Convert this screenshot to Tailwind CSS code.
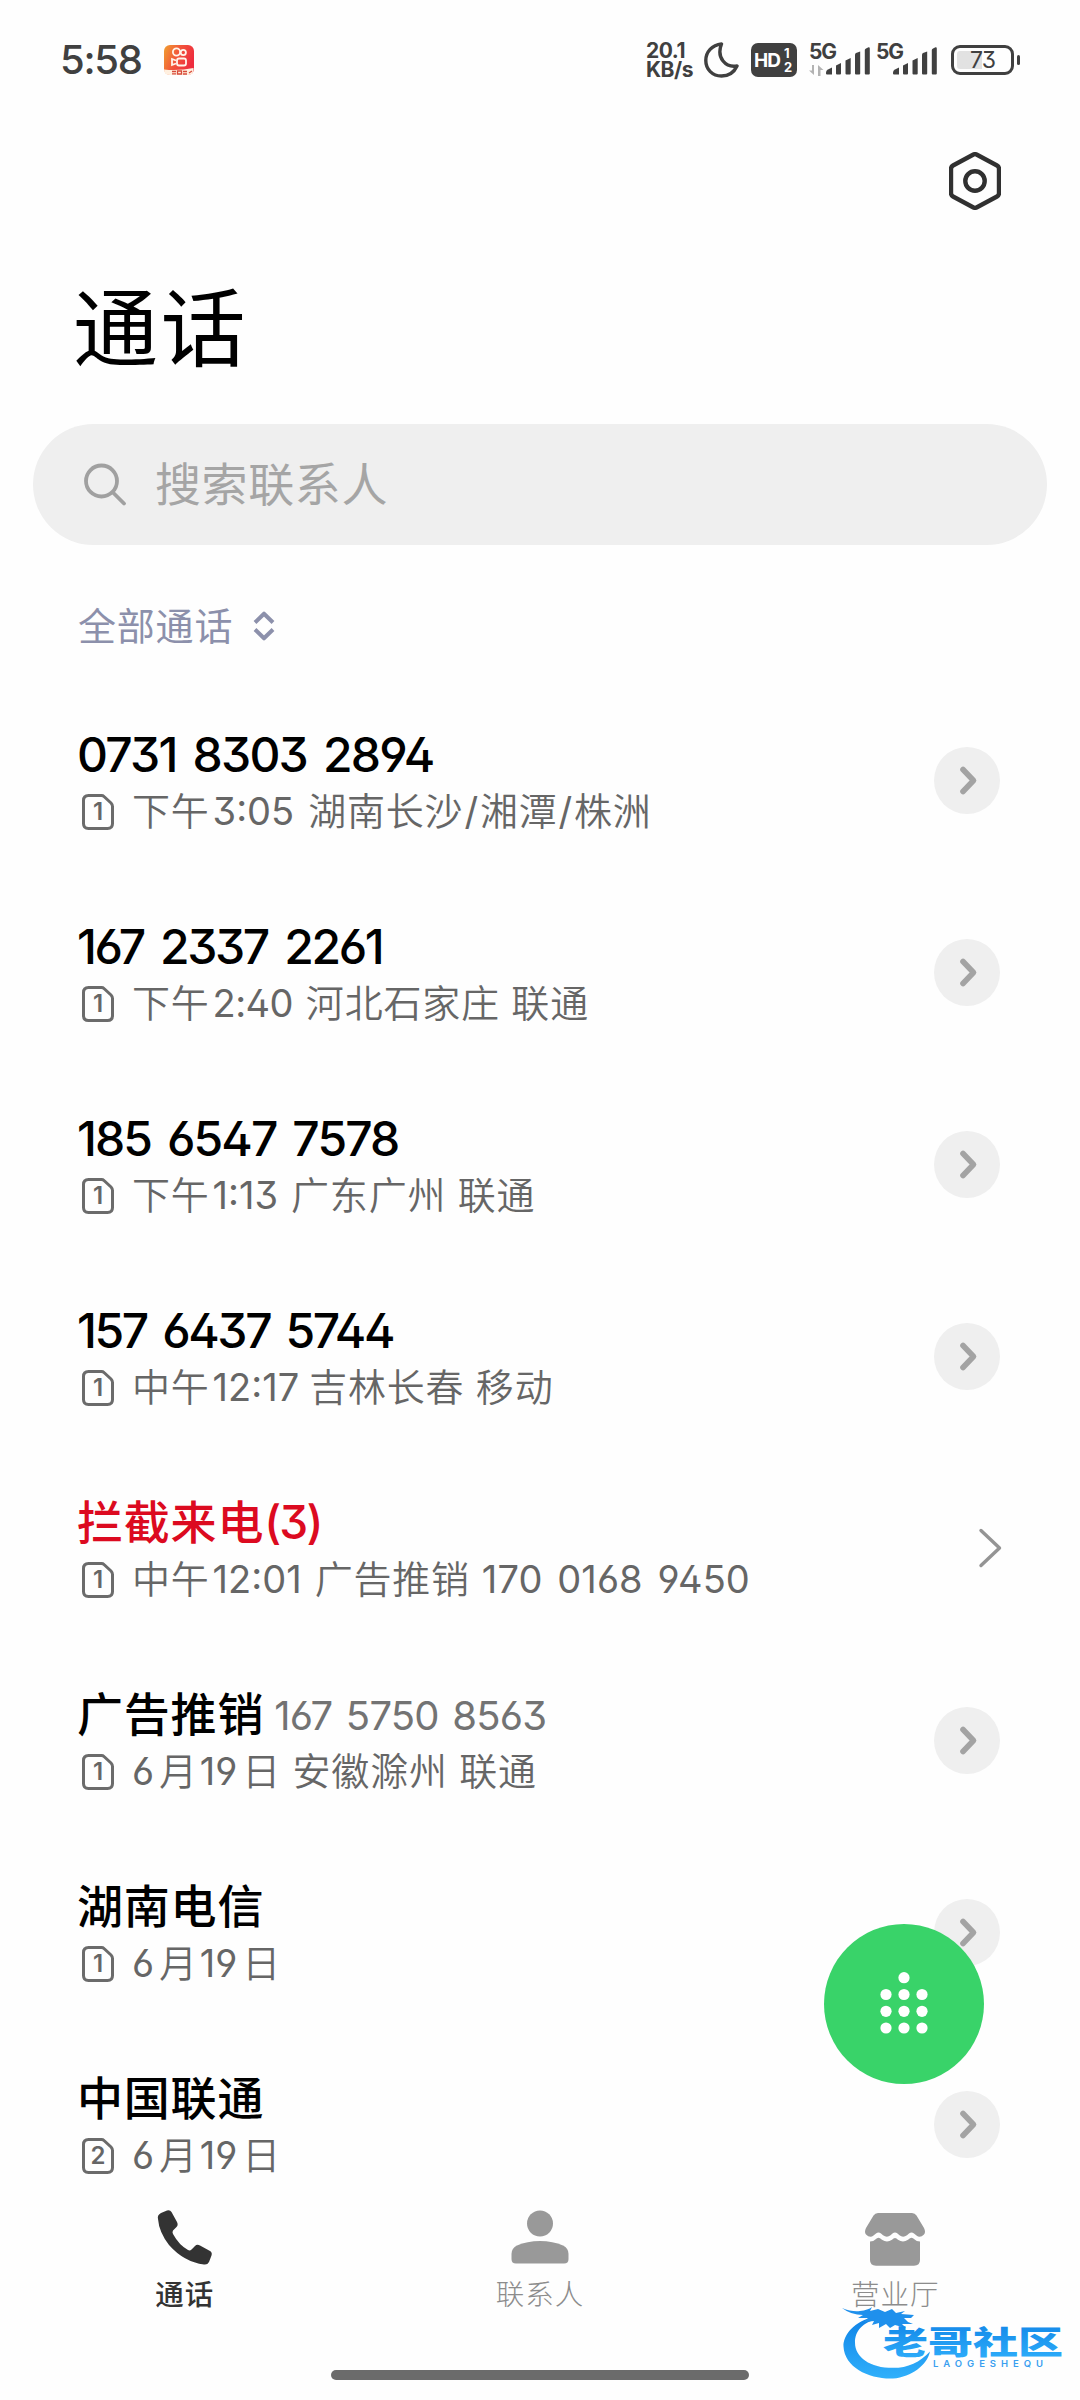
<!DOCTYPE html>
<html lang="zh-CN">
<head>
<meta charset="utf-8">
<title>通话</title>
<script src="https://cdn.jsdelivr.net/npm/@tailwindcss/browser@4"></script>
</head>
<body class="bg-[#fefefe] font-['Inter','Noto_Sans_CJK_SC',sans-serif] [font-feature-settings:'ss01','cv09']">
<svg class="hidden">
  <symbol id="sim" viewBox="0 0 32 36"><path d="M6.500 1.500H19.500Q21 1.500 22 2.500L29 9Q30.500 10.500 30.500 12.500V29.500Q30.500 34.500 25.500 34.500H6.500Q1.500 34.500 1.500 29.500V6.500Q1.500 1.500 6.500 1.500Z" fill="none" stroke="#6b6b6b" stroke-width="3"/></symbol>
  <symbol id="go" viewBox="0 0 66 67"><ellipse cx="33" cy="33.500" rx="33" ry="33.500" fill="#efefef"/><path d="M29 22.500L39.500 33.500L29 44.500" fill="none" stroke="#a3a3a3" stroke-width="5.600" stroke-linecap="round" stroke-linejoin="round"/></symbol>
  <symbol id="bars" viewBox="0 0 45 28"><g fill="#404040"><path d="M0 25.500Q0 23.500 2 22.500L6 20.500V27.500H1Q0 27.500 0 26.500Z"/><path d="M10 18.500L15 16V26.500Q15 27.500 14 27.500H11Q10 27.500 10 26.500Z"/><path d="M19.500 13.500L24.700 11V26.500Q24.700 27.500 23.700 27.500H20.500Q19.500 27.500 19.500 26.500Z"/><path d="M29 7.500Q29 6.500 30 6L34.200 4.500V26.500Q34.200 27.500 33.200 27.500H30Q29 27.500 29 26.500Z"/><path d="M38.800 3Q38.800 2 40 1.500L42.500 .3Q43.800 0 43.800 1.500V26.500Q43.800 27.500 42.800 27.500H39.800Q38.800 27.500 38.800 26.500Z"/></g></symbol>
</svg>

<div class="relative flex h-[2400px] w-[1080px] flex-col overflow-hidden">

  <!-- status bar -->
  <div class="flex h-[120px] shrink-0 items-center pl-[60px] pr-[60px] text-[#404040]">
    <span class="text-[40px] font-[450] leading-none tracking-[-1.3px]">5:58</span>
    <svg class="ml-[22px]" width="30" height="30" viewBox="0 0 30 30">
      <defs><linearGradient id="ks" x1="0" y1="0" x2="1" y2=".4"><stop offset="0" stop-color="#f0a030"/><stop offset=".5" stop-color="#f2553a"/><stop offset="1" stop-color="#ee2c3e"/></linearGradient></defs>
      <rect width="30" height="30" rx="6" fill="url(#ks)"/>
      <g fill="none" stroke="#fff4ea" stroke-width="1.800"><circle cx="12.500" cy="7" r="3.600"/><circle cx="19.300" cy="7.500" r="2.600"/><rect x="13" y="13.500" width="9" height="7" rx="2"/><path d="M12 15.500L8 14V20L12 18.500"/></g>
      <path d="M0 24.500Q15 26 29.500 23V25Q29.500 30 24 30H6Q0 30 0 24.500Z" fill="#fff0e0"/>
      <path d="M8 26.500h4M8 28.800h4M13.500 26h4v3h-4zM19 26.500h4M19 29h4M25 28l3-2" stroke="#d84a3a" stroke-width="1.300" fill="none"/>
    </svg>
    <div class="ml-auto flex items-center">
      <div class="flex w-[50px] flex-col text-[21px] font-bold leading-[19px] tracking-[-0.5px]"><span>20.1</span><span>KB/s</span></div>
      <svg class="ml-[8px]" width="35" height="36" viewBox="0 0 35 36"><path d="M17.500 2C8 3 1.800 10 1.800 18.500C1.800 27.500 8.500 34 17.500 34C24.500 34 30 30.500 33 24C22 26 12 16 17.500 2Z" fill="none" stroke="#404040" stroke-width="3.400" stroke-linejoin="round"/></svg>
      <div class="ml-[12px] flex h-[34px] w-[46px] items-center rounded-[7px] bg-[#404040] pl-[3px] text-white">
        <span class="text-[19px] font-bold leading-none tracking-[-1px]">HD</span>
        <span class="ml-[4px] flex flex-col text-[13px] font-bold leading-[14px]"><span>1</span><span>2</span></span>
      </div>
      <div class="relative ml-[12px] h-[32px] w-[61px]">
        <span class="absolute left-0 top-0 text-[21px] font-bold leading-[16px] tracking-[-1.2px]">5G</span>
        <svg class="absolute left-0 top-[21px]" width="15" height="11" viewBox="0 0 15 11"><path d="M5 0V10L0 5.500H3V0ZM9 11V0L14.500 5H11.500V11Z" fill="#b3b3b3"/></svg>
        <svg class="absolute left-[17px] top-[3px]" width="45" height="28"><use href="#bars"/></svg>
      </div>
      <div class="relative ml-[6px] h-[32px] w-[61px]">
        <span class="absolute left-0 top-0 text-[21px] font-bold leading-[16px] tracking-[-1.2px]">5G</span>
        <svg class="absolute left-[17px] top-[3px]" width="45" height="28"><use href="#bars"/></svg>
      </div>
      <div class="ml-[14px] flex h-[30px] w-[63px] items-center rounded-[9px] border-3 border-[#404040] p-[3px]">
        <div class="flex h-full w-full items-center justify-center rounded-[3px] bg-linear-to-r from-[#e2e2e2] from-50% to-transparent to-50% text-[23px] leading-none tracking-[-1px]">73</div>
      </div>
      <div class="ml-[3px] h-[10px] w-[3px] rounded-full bg-[#404040]"></div>
    </div>
  </div>

  <!-- settings -->
  <div class="flex h-[122px] shrink-0 items-center justify-end pr-[79px]">
    <svg width="52" height="58" viewBox="0 0 52 58" fill="none" stroke="#303030" stroke-width="4.400"><path d="M24 2.700Q26 1.600 28 2.700L48 13.500Q50 14.600 50 17V41Q50 43.400 48 44.500L28 55.300Q26 56.400 24 55.300L4 44.500Q2 43.400 2 41V17Q2 14.600 4 13.500Z"/><circle cx="26" cy="29" r="9.700"/></svg>
  </div>

  <h1 class="flex h-[182px] shrink-0 items-center pb-[8px] pl-[73px] text-[85px] font-normal leading-none tracking-[2.5px] text-black">通话</h1>

  <div class="mx-[33px] flex h-[121px] shrink-0 items-center rounded-full bg-[#efefef] pb-[2px] pl-[51px] text-[#a5a5a5]">
    <svg width="43" height="44" viewBox="0 0 43 44" fill="none" stroke="#a0a0a0" stroke-width="3.800" stroke-linecap="round"><circle cx="17.500" cy="19" r="15.500"/><path d="M29 30.500L40 41.500"/></svg>
    <span class="ml-[28px] text-[46px] leading-none tracking-[0.6px]">搜索联系人</span>
  </div>

  <div class="flex h-[140px] shrink-0 items-center pl-[78px] pt-[21px] text-[#8c90ab]">
    <span class="text-[38px] leading-none tracking-[0.8px]">全部通话</span>
    <svg class="ml-[20px]" width="22" height="30" viewBox="0 0 22 30" fill="none" stroke="#8c90ab" stroke-width="4" stroke-linejoin="round"><path d="M2 11.500L11 2.700L20 11.500M2 18.500L11 27.300L20 18.500"/></svg>
  </div>

  <!-- call log -->
  <div class="-mt-px h-[1506px] shrink-0 overflow-hidden">
    <div class="flex h-[192px] items-center justify-between pl-[77px] pr-[80px]">
      <div class="pt-[6px]">
        <div class="h-[57px] text-[48px] font-[450] leading-[58px] tracking-[-1.800px] text-black [word-spacing:5px]">0731 8303 2894</div>
        <div class="flex h-[57px] items-center pl-[5px] text-[38px] font-[350] leading-[57px] tracking-[0.8px] text-[#666]">
          <span class="relative mr-[18px] flex h-[36px] w-[32px] items-center justify-center text-[24px] font-semibold leading-none tracking-normal"><svg class="absolute inset-0" width="32" height="36"><use href="#sim"/></svg>1</span>
          <span>下午</span><span class="ml-[3px] mr-[14px] font-normal tracking-normal">3:05</span><span>湖南长沙<span class="mx-[1px] font-normal">/</span>湘潭<span class="mx-[1px] font-normal">/</span>株洲</span>
        </div>
      </div>
      <svg width="66" height="67"><use href="#go"/></svg>
    </div>

    <div class="flex h-[192px] items-center justify-between pl-[77px] pr-[80px]">
      <div class="pt-[6px]">
        <div class="h-[57px] text-[48px] font-[450] leading-[58px] tracking-[-2.400px] text-black [word-spacing:6px]">167 2337 2261</div>
        <div class="flex h-[57px] items-center pl-[5px] text-[38px] font-[350] leading-[57px] tracking-[0.8px] text-[#666]">
          <span class="relative mr-[18px] flex h-[36px] w-[32px] items-center justify-center text-[24px] font-semibold leading-none tracking-normal"><svg class="absolute inset-0" width="32" height="36"><use href="#sim"/></svg>1</span>
          <span>下午</span><span class="ml-[3px] mr-[13px] font-normal tracking-[-0.6px]">2:40</span><span>河北石家庄 联通</span>
        </div>
      </div>
      <svg width="66" height="67"><use href="#go"/></svg>
    </div>

    <div class="flex h-[192px] items-center justify-between pl-[77px] pr-[80px]">
      <div class="pt-[6px]">
        <div class="h-[57px] text-[48px] font-[450] leading-[58px] tracking-[-1.900px] text-black [word-spacing:5px]">185 6547 7578</div>
        <div class="flex h-[57px] items-center pl-[5px] text-[38px] font-[350] leading-[57px] tracking-[0.8px] text-[#666]">
          <span class="relative mr-[18px] flex h-[36px] w-[32px] items-center justify-center text-[24px] font-semibold leading-none tracking-normal"><svg class="absolute inset-0" width="32" height="36"><use href="#sim"/></svg>1</span>
          <span>下午</span><span class="ml-[3px] mr-[13px] font-normal tracking-normal">1:13</span><span>广东广州 联通</span>
        </div>
      </div>
      <svg width="66" height="67"><use href="#go"/></svg>
    </div>

    <div class="flex h-[192px] items-center justify-between pl-[77px] pr-[80px]">
      <div class="pt-[6px]">
        <div class="h-[57px] text-[48px] font-[450] leading-[58px] tracking-[-2.400px] text-black [word-spacing:5px]">157 6437 5744</div>
        <div class="flex h-[57px] items-center pl-[5px] text-[38px] font-[350] leading-[57px] tracking-[0.8px] text-[#666]">
          <span class="relative mr-[18px] flex h-[36px] w-[32px] items-center justify-center text-[24px] font-semibold leading-none tracking-normal"><svg class="absolute inset-0" width="32" height="36"><use href="#sim"/></svg>1</span>
          <span>中午</span><span class="ml-[3px] mr-[10px] font-normal tracking-normal">12:17</span><span>吉林长春 移动</span>
        </div>
      </div>
      <svg width="66" height="67"><use href="#go"/></svg>
    </div>

    <div class="flex h-[192px] items-center justify-between pl-[77px] pr-[78px]">
      <div class="pt-[6px]">
        <div class="h-[57px] text-[46px] font-medium leading-[56px] tracking-[0.8px] text-[#dc0a20]">拦截来电<span class="tracking-[-1.800px]">(3)</span></div>
        <div class="flex h-[57px] items-center pl-[5px] text-[38px] font-[350] leading-[57px] tracking-[0.8px] text-[#666]">
          <span class="relative mr-[18px] flex h-[36px] w-[32px] items-center justify-center text-[24px] font-semibold leading-none tracking-normal"><svg class="absolute inset-0" width="32" height="36"><use href="#sim"/></svg>1</span>
          <span>中午</span><span class="ml-[3px] mr-[13px] font-normal tracking-normal">12:01</span><span>广告推销</span><span class="ml-[12px] font-normal tracking-[0.1px] [word-spacing:4px]">170 0168 9450</span>
        </div>
      </div>
      <svg width="24" height="40" viewBox="0 0 24 40" fill="none" stroke="#949494" stroke-width="3.400" stroke-linecap="round" stroke-linejoin="round"><path d="M3 2.500L21.500 20L3 37.500"/></svg>
    </div>

    <div class="flex h-[192px] items-center justify-between pl-[77px] pr-[80px]">
      <div class="pt-[6px]">
        <div class="h-[57px] text-[46px] font-medium leading-[56px] tracking-[0.8px] text-black">广告推销<span class="relative -top-px ml-[10px] text-[40px] font-normal tracking-[-0.8px] text-[#737373] [word-spacing:3px]">167 5750 8563</span></div>
        <div class="flex h-[57px] items-center pl-[5px] text-[38px] font-[350] leading-[57px] tracking-[0.8px] text-[#666]">
          <span class="relative mr-[18px] flex h-[36px] w-[32px] items-center justify-center text-[24px] font-semibold leading-none tracking-normal"><svg class="absolute inset-0" width="32" height="36"><use href="#sim"/></svg>1</span>
          <span class="font-normal">6</span><span class="ml-[4px]">月</span><span class="ml-[2px] font-normal tracking-normal">19</span><span class="ml-[5px]">日 安徽滁州 联通</span>
        </div>
      </div>
      <svg width="66" height="67"><use href="#go"/></svg>
    </div>

    <div class="flex h-[192px] items-center justify-between pl-[77px] pr-[80px]">
      <div class="pt-[6px]">
        <div class="h-[57px] text-[46px] font-medium leading-[56px] tracking-[0.8px] text-black">湖南电信</div>
        <div class="flex h-[57px] items-center pl-[5px] text-[38px] font-[350] leading-[57px] tracking-[0.8px] text-[#666]">
          <span class="relative mr-[18px] flex h-[36px] w-[32px] items-center justify-center text-[24px] font-semibold leading-none tracking-normal"><svg class="absolute inset-0" width="32" height="36"><use href="#sim"/></svg>1</span>
          <span class="font-normal">6</span><span class="ml-[4px]">月</span><span class="ml-[2px] font-normal tracking-normal">19</span><span class="ml-[5px]">日</span>
        </div>
      </div>
      <svg width="66" height="67"><use href="#go"/></svg>
    </div>

    <div class="flex h-[192px] items-center justify-between pl-[77px] pr-[80px]">
      <div class="pt-[6px]">
        <div class="h-[57px] text-[46px] font-medium leading-[56px] tracking-[0.8px] text-black">中国联通</div>
        <div class="flex h-[57px] items-center pl-[5px] text-[38px] font-[350] leading-[57px] tracking-[0.8px] text-[#666]">
          <span class="relative mr-[18px] flex h-[36px] w-[32px] items-center justify-center text-[24px] font-semibold leading-none tracking-normal"><svg class="absolute inset-0" width="32" height="36"><use href="#sim"/></svg>2</span>
          <span class="font-normal">6</span><span class="ml-[4px]">月</span><span class="ml-[2px] font-normal tracking-normal">19</span><span class="ml-[5px]">日</span>
        </div>
      </div>
      <svg width="66" height="67"><use href="#go"/></svg>
    </div>
  </div>

  <!-- tabs -->
  <div class="grid h-[179px] shrink-0 grid-cols-3 px-[7px] pt-[19px] text-[28.500px] leading-[34px] tracking-[1px] text-[#8c8c8c]">
    <div class="flex flex-col items-center font-medium text-[#333]">
      <svg width="56" height="58" viewBox="0 -1 56 58"><path d="M1 9Q0 5 4 3L10 .5Q13-.5 14.500 2L20 12Q21.500 15 19.500 17L16 20.500Q15 22 16 24Q22 35 31 40Q33 41 34.500 39.500L38 36Q40 34 43 35.500L53 41Q55.500 42.500 54.500 45.500L52 52Q50.500 55 47 54.500Q27 52 12 35Q2 22 1 9Z" fill="#333"/></svg>
      <span class="mt-[11px]">通话</span>
    </div>
    <div class="flex flex-col items-center font-light">
      <svg width="58" height="58" viewBox="0 -1 58 58" fill="#999"><circle cx="29" cy="13.500" r="13"/><path d="M.5 44Q.5 38 6 35.500Q16 31 29 31Q42 31 52 35.500Q57.500 38 57.500 44V49Q57.500 53.500 53 53.500H5Q.5 53.500 .5 49Z"/></svg>
      <span class="mt-[11px]">联系人</span>
    </div>
    <div class="flex flex-col items-center font-light">
      <svg width="60" height="58" viewBox="0 -4 60 58" fill="#999"><path d="M13 0H47Q50 0 51.500 2.500L59 15Q61 19 59 21.500Q55 25.500 51.500 22.500L49 20.500Q46.500 18.500 44 20.500L42 22.300Q38 25 34.500 22.300L32.500 20.500Q30 18.500 27.500 20.500L25.500 22.300Q22 25 18 22.300L16 20.500Q13.500 18.500 11 20.500L8.500 22.500Q5 25.500 1 21.500Q-1 19 1 15L8.500 2.500Q10 0 13 0Z"/><path d="M5 28.500Q8.500 28.500 11 26L12 25.200Q13.500 24.200 15 25.200L17 26.800Q22 30 27 26.800L28.500 25.500Q30 24.300 31.500 25.500L33 26.800Q38 30 43 26.800L45 25.200Q46.500 24.200 48 25.200L49 26Q51.500 28.500 55 28.500V47Q55 52.700 49 52.700H11Q5 52.700 5 47Z"/></svg>
      <span class="mt-[11px]">营业厅</span>
    </div>
  </div>

  <div class="mt-px h-[10px] w-[418px] shrink-0 self-center rounded-full bg-[#6b6b6b]"></div>

  <!-- dial pad button -->
  <div class="absolute left-[824px] top-[1924px] flex h-[160px] w-[160px] items-center justify-center rounded-full bg-[#39d369]">
    <svg class="-mt-[3px] overflow-visible" width="48" height="62" viewBox="0 0 48 62" fill="#fff"><circle cx="24" cy="5.700" r="5.600"/><circle cx="6" cy="22.500" r="5.600"/><circle cx="24" cy="22.500" r="5.600"/><circle cx="42" cy="22.500" r="5.600"/><circle cx="6" cy="39.300" r="5.600"/><circle cx="24" cy="39.300" r="5.600"/><circle cx="42" cy="39.300" r="5.600"/><circle cx="6" cy="56" r="5.600"/><circle cx="24" cy="56" r="5.600"/><circle cx="42" cy="56" r="5.600"/></svg>
  </div>

  <!-- community badge -->
  <svg class="absolute left-[840px] top-[2300px]" width="230" height="80" viewBox="0 0 230 80">
    <defs>
      <linearGradient id="wm" x1="0" y1="0" x2="0" y2="1"><stop offset="0" stop-color="#0f82e6"/><stop offset="1" stop-color="#30b0fb"/></linearGradient>
    </defs>
    <path d="M35 18C14 23 3 37 3.500 49C4.500 71 30 83 53 82C72 80 87 68 90 54C80 65 68 71 53 71C30 71 15 60 15 45C15 33 22 24 39 20Z" transform="translate(0 -1) scale(1 .97)" fill="url(#wm)"/>
    <path d="M2 8Q12 12 20 11Q28 10 32 7L30 11L38 9L45 12L52 9L56 13L65 11L61 14L74 15L71 18H64L68 22L73 24L62 24L66 28L55 25L50 28L46 24L39 28V23L32 25L34 21L24 22L28 18L18 18L23 15Q11 15 2 8Z" fill="#1f90ec"/>
    <text x="43" y="54" font-family="Noto Sans CJK SC, sans-serif" font-size="32" font-weight="900" fill="url(#wm)" textLength="180" lengthAdjust="spacingAndGlyphs">老哥社区</text>
    <text x="93" y="66.500" font-family="Inter, sans-serif" font-size="9.500" font-weight="600" fill="#3a9ff0" textLength="110">LAOGESHEQU</text>
  </svg>
</div>
</body>
</html>
